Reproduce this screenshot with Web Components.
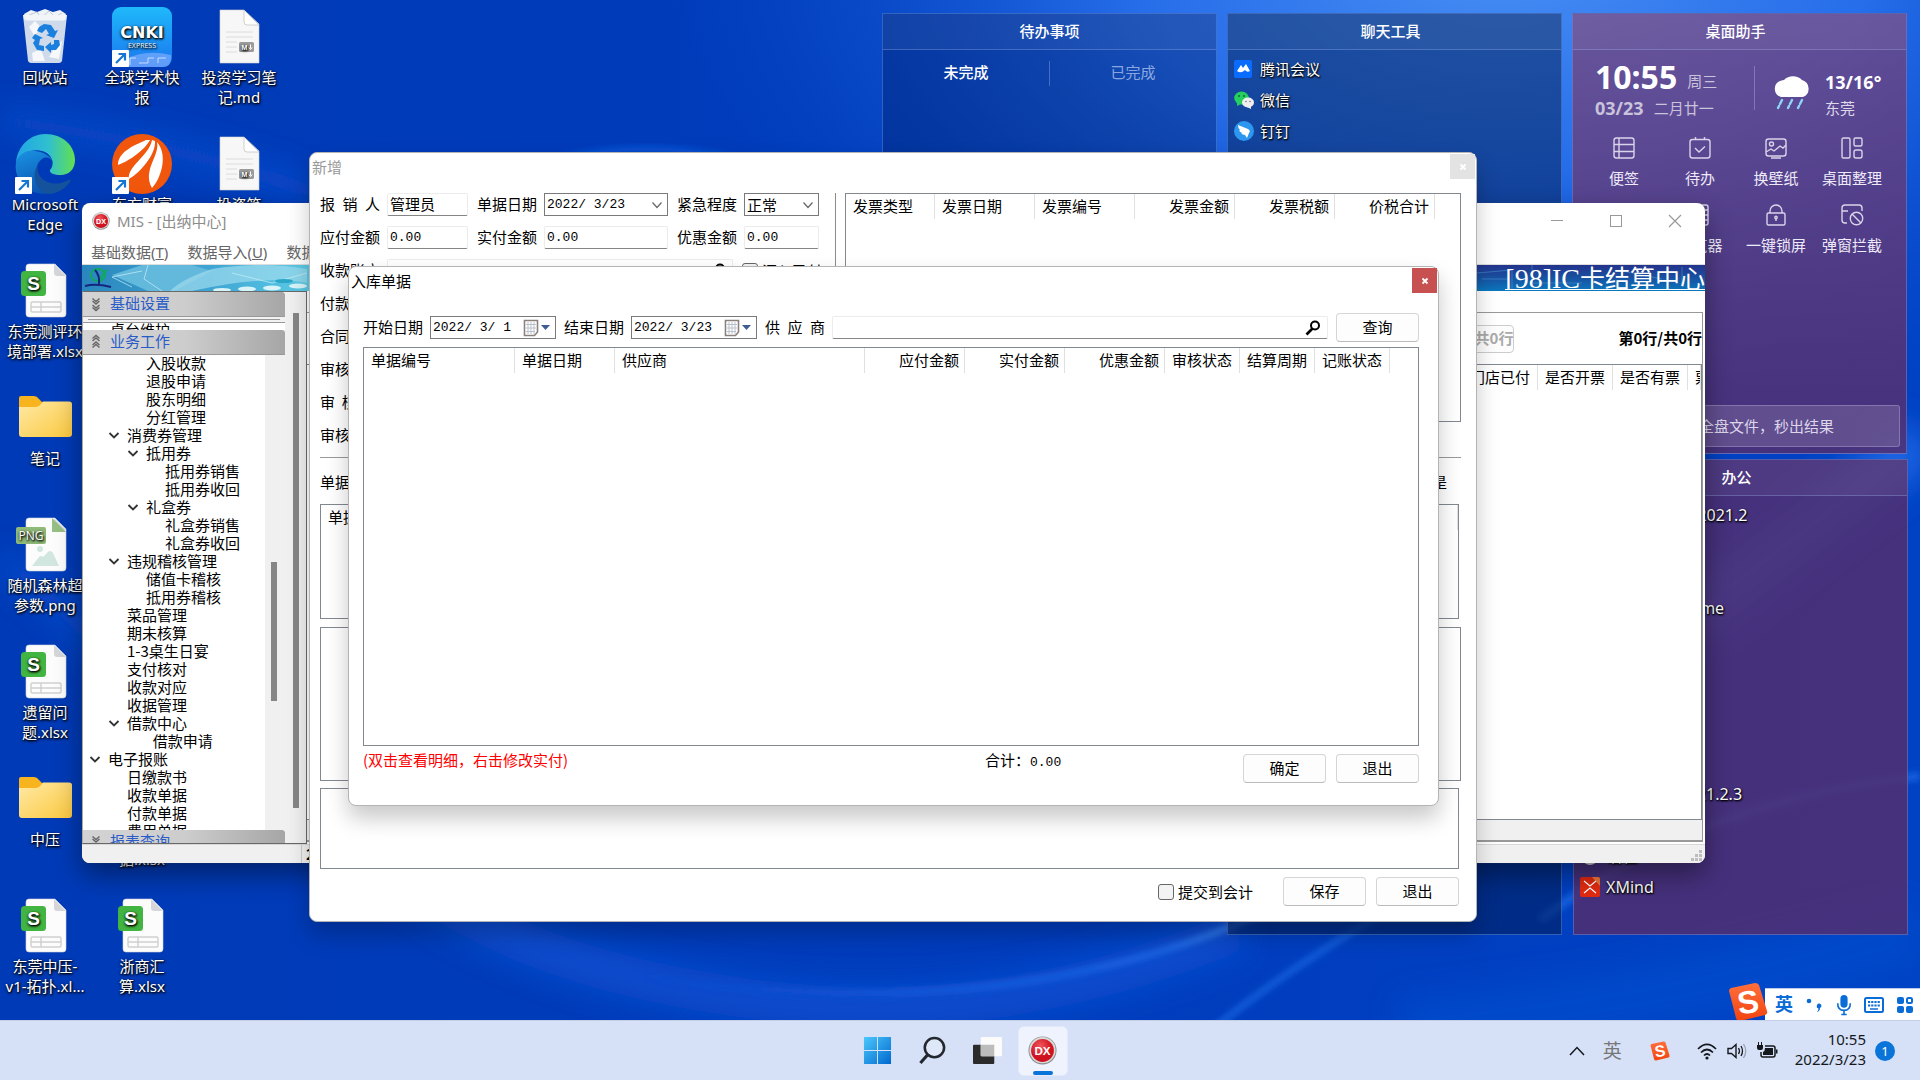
<!DOCTYPE html>
<html lang="zh-CN">
<head>
<meta charset="utf-8">
<title>桌面</title>
<style>
  html, body { margin: 0; height: 100%; overflow: hidden; }
  body { font: 15px/20px "Noto Sans", "Noto Sans CJK SC", sans-serif; }
</style>
</head>
<body>
<desktop-shell></desktop-shell>
<script>
const FORM_FONT = '"Noto Sans CJK SC", sans-serif';

function define(name, render) {
  customElements.define(name, class extends HTMLElement {
    constructor() {
      super();
      this.attachShadow({ mode: 'open' });
    }
    connectedCallback() {
      const t = document.createElement('template');
      t.innerHTML = '<style>*{box-sizing:border-box}</style>' + render(k => this.getAttribute(k) || '', this);
      this.shadowRoot.replaceChildren(t.content.cloneNode(true));
    }
  });
}

/* ---------- icons ---------- */
const DX = `<defs><radialGradient id="dx" cx=".4" cy=".3"><stop offset="0" stop-color="#f0575c"/><stop offset="1" stop-color="#cf1220"/></radialGradient></defs>
  <circle cx="15" cy="15" r="14.500" fill="#8d8d8d"/><circle cx="15" cy="14.600" r="13.600" fill="#d9d9d9"/><circle cx="15" cy="15" r="11.800" fill="url(#dx)"/>
  <text x="15" y="19.400" font-size="12" font-weight="700" text-anchor="middle" fill="#fff" font-family="Liberation Sans">DX</text>`;
const SHORTCUT = `<rect x="0" y="43" width="17" height="17" rx="1" fill="#fff"/><path d="M4 56L13 47M6.500 47H13V53.500" fill="none" stroke="#1677d2" stroke-width="2.200"/>`;
const SHEET = `<path d="M14 3H40L51 14V53Q51 56 48 56H14Q11 56 11 53V6Q11 3 14 3Z" fill="#fcfcfc" stroke="#cdd3dc" stroke-width=".6"/><path d="M39 3L51 15H42Q39 15 39 12Z" fill="#d4d6da"/>`;
const MD = `<path d="M11 3H35L50 17V56H11Z" fill="#f7f7f7" stroke="#d2d2d2" stroke-width=".6"/><path d="M35 3L50 18H38Q35 18 35 15Z" fill="#fff" stroke="#c4c4c4" stroke-width=".8"/>
  <path d="M17 25H44M17 30H44M17 35H28M17 40H28M17 45H28" stroke="#dcdcdc" stroke-width="1"/><rect x="30" y="35" width="15" height="10" rx="1.500" fill="#9b9b9b"/>
  <text x="35.500" y="42.600" font-size="7" font-weight="700" text-anchor="middle" fill="#fff" font-family="Liberation Sans">M</text><path d="M41.500 37.500V41.500M39.900 40.500L41.500 42.500L43.100 40.500" stroke="#fff" fill="none"/>`;
const ICONS = {
  dx: ['0 0 30 30', DX],
  bin: ['0 0 60 60', `<path d="M9 7L16 3L22 5L30 2L38 5L45 3L51 7L49 14H11Z" fill="#eef3f8"/><path d="M14 8L22 5L26 11L34 4L40 10L47 6" fill="none" stroke="#c3ccd6"/>
    <path d="M8 8H52L47 54Q46 56 44 56H16Q14 56 13 54Z" fill="#dfe7ef" fill-opacity=".93"/><path d="M8 8H52L51 13H9Z" fill="#fff" fill-opacity=".6"/><path d="M14 20L20 14L27 22L19 28ZM40 40L47 34L44 52L34 50ZM17 46L26 42L30 54L18 54Z" fill="#fff" fill-opacity=".8"/>
    <g fill="#1a7fdd"><path d="M24 20L29 17L36 18L40 24L43 23L39 31L31 28L34 27L31 22L27 26L22 24Z"/><path d="M20 27L28 31L25 32L24 38L29 39V44L22 43L18 36L20 33L17 31Z"/><path d="M44 33L45 38L41 43H36V46L30 40L36 35V38L39 37L39 33Z"/></g>`],
  cnki: ['0 0 60 60', `<defs><linearGradient id="g" x2="0" y2="1"><stop offset="0" stop-color="#1fb9fb"/><stop offset="1" stop-color="#1a76ef"/></linearGradient></defs><rect width="60" height="60" rx="9" fill="url(#g)"/>
    <path d="M14 52Q34 42 59 48V51Q59 60 51 60H14Z" fill="#8db4ff" fill-opacity=".6"/><path d="M18 58V51H24M27 56H36V51H42M46 56V51H54" stroke="#dfeaff" fill="none" stroke-width=".8"/>
    <text x="30" y="31" font-size="16" font-weight="700" text-anchor="middle" fill="#fff" font-family="DejaVu Sans">CNKI</text><text x="30" y="41" font-size="7" text-anchor="middle" fill="#fff" font-family="Open Sans">EXPRESS</text>` + SHORTCUT],
  edge: ['0 0 60 60', `<defs><linearGradient id="a" x1="0" x2="1"><stop offset="0" stop-color="#21a4e6"/><stop offset=".55" stop-color="#30c0cf"/><stop offset="1" stop-color="#62e04f"/></linearGradient><linearGradient id="b" x2=".4" y2="1"><stop offset="0" stop-color="#1b93e2"/><stop offset="1" stop-color="#0a56b4"/></linearGradient></defs>
    <path d="M1 28C3 11 16 0 30 0C48 0 60 12 60 26C60 36 53 41 46 41C39 41 34 39 35 36C38 33 39 27 35 22C29 14 9 13 1 28Z" fill="url(#a)"/>
    <path d="M1 28C5 18 14 16 20 17C30 18 37 24 38 28C36 24 31 22 27 25C22 29 20 35 23 42C27 52 38 57 46 54C36 61 25 61 16 57C5 51 -1 40 1 28Z" fill="url(#b)"/>
    <path d="M23 31C20 43 33 52 46 49C51 48 54 45 56 46C52 54 42 60 33 60C22 58 15 42 23 31Z" fill="#15529c"/>` + SHORTCUT],
  east: ['0 0 60 60', `<circle cx="30" cy="30" r="30" fill="#f0560c"/><path d="M34 6C21 12 6 18 6 31C15 28 32 17 38 6Z" fill="#fff"/><path d="M40 6C37 22 15 32 17 45C29 38 44 20 43 7Z" fill="#fff"/><path d="M45 8C48 22 30 36 40 54C48 46 57 22 45 8Z" fill="#fff"/>` + SHORTCUT],
  md: ['0 0 60 60', MD],
  xlsx: ['0 0 60 60', SHEET + `<rect x="16" y="41" width="30" height="10" rx="1.500" fill="none" stroke="#cfcfcf" stroke-width="1.400"/><path d="M16 46H46M26 41V51" stroke="#cfcfcf" stroke-width="1.400"/><rect x="6" y="10" width="25" height="25" rx="3.500" fill="#41b441"/><text x="18.500" y="29" font-size="19" font-weight="700" text-anchor="middle" fill="#fff" font-family="Liberation Sans">S</text>`],
  png: ['0 0 60 60', SHEET + `<path d="M37 3L51 17H37Z" fill="#96bf85"/><circle cx="25" cy="34" r="3" fill="#d2e6e0"/><path d="M17 51L24 42Q26 40 28 42L32 38Q35 34 38 38L44 51Z" fill="#d2e6e0"/><rect x="1" y="12" width="30" height="17" rx="2" fill="#8fba78"/><text x="16" y="25" font-size="12" text-anchor="middle" fill="#fff" font-family="Open Sans">PNG</text>`],
  folder: ['0 0 60 60', `<defs><linearGradient id="f" x2="1" y2="1"><stop offset="0" stop-color="#ffe9a6"/><stop offset="1" stop-color="#fbc93f"/></linearGradient></defs><path d="M4 10Q4 8 6 8H19Q22 8 24 11L27 14H54Q56 14 56 16V24H4Z" fill="#f7b41f"/><path d="M4 19H21Q24 19 26 16L28 13.500H54Q57 13.500 57 16V46Q57 49 54 49H7Q4 49 4 46Z" fill="url(#f)"/>`],
  meeting: ['0 0 20 20', `<rect y="1" width="18" height="18" rx="2" fill="#0a6cff"/><path d="M3 12L7 6L9 9L12 5L16 12Q13 14 11 11Q7 15 3 12Z" fill="#fff"/>`],
  wechat: ['0 0 20 20', `<ellipse cx="7.500" cy="8" rx="7.300" ry="6.500" fill="#25cf60"/><path d="M3 12L3 16L7 14Z" fill="#25cf60"/><ellipse cx="14" cy="12.500" rx="6" ry="5" fill="#efefef"/><path d="M17 16V19L13 17Z" fill="#efefef"/><circle cx="5" cy="6" r="1" fill="#0d6b2c"/><circle cx="10" cy="6" r="1" fill="#0d6b2c"/><circle cx="12" cy="11.500" r=".8" fill="#777"/><circle cx="16" cy="11.500" r=".8" fill="#777"/>`],
  ding: ['0 0 20 20', `<circle cx="10" cy="10" r="10" fill="#2d96ef"/><path d="M4 4L14 8Q17 10 15 12L13 17L11 14Q6 13 8 12Q4 10 6 9Q4 7 4 4Z" fill="#fff"/>`],
  xmind: ['0 0 20 20', `<rect width="20" height="20" rx="2" fill="#e32a10"/><path d="M12 0H18Q20 0 20 2V9Z" fill="#f07a3c"/><path d="M4 4L10 9L16 4M4 16L10 11L16 16" fill="none" stroke="#fff" stroke-width="1.300"/>`],
  disc: ['0 0 20 20', `<circle cx="10" cy="10" r="9" fill="#d8dcd8"/>`],
  cloud: ['0 0 40 38', `<path d="M9 24A8.500 8.500 0 0 1 8 8Q11 7 12 7A12 11 0 0 1 30 7A9 9 0 0 1 31 24Z" fill="#fff"/><path d="M10 27L8 31M7 33L6 35M20 27L18 31M17 33L16 35M30 27L28 31M27 33L26 35" stroke="#8fd4f7" stroke-width="2.400" stroke-linecap="round"/>`],
  note: ['0 0 24 24', `<rect x="2" y="2" width="20" height="20" rx="2.500"/><path d="M2 8.500H22M2 15.500H22M7 2V22"/>`],
  todo: ['0 0 24 24', `<rect x="2" y="3.500" width="20" height="18.500" rx="2.500"/><path d="M7.500 1V4M16.500 1V4M7 12L11 16L17 10.500"/>`],
  wall: ['0 0 24 24', `<rect x="2" y="3" width="20" height="17" rx="2.500"/><circle cx="7.500" cy="8" r="2"/><path d="M2 16L7 13L10 15L16 10L19 12L22 9M7 22H17"/>`],
  tidy: ['0 0 24 24', `<rect x="2" y="2" width="8" height="20" rx="1.500"/><rect x="14" y="2" width="8" height="8" rx="1.500"/><rect x="14" y="14" width="8" height="8" rx="2"/>`],
  viewer: ['0 0 24 24', `<rect x="2" y="2" width="18" height="20" rx="2"/><path d="M13 7H20M13 12H20M13 17H20"/>`],
  lock: ['0 0 24 24', `<rect x="3" y="10" width="18" height="12" rx="1.500"/><path d="M6 10V8A6 6 0 0 1 18 8V10M12 15V18"/><circle cx="12" cy="14.500" r="1.200"/>`],
  block: ['0 0 24 24', `<path d="M22 8V5Q22 2 19 2H5Q2 2 2 5V17Q2 20 5 20H7M2 8H8"/><circle cx="16.500" cy="15.500" r="6.200"/><path d="M12 11L21 20"/>`],
  start: ['0 0 30 30', `<defs><linearGradient id="s" x2="1" y2="1"><stop offset="0" stop-color="#4cc8fb"/><stop offset="1" stop-color="#0068cf"/></linearGradient></defs><path d="M1 1H14.500V14.500H1ZM15.500 1H29V14.500H15.500ZM1 15.500H14.500V29H1ZM15.500 15.500H29V29H15.500Z" fill="url(#s)"/>`],
  find: ['0 0 30 30', `<circle cx="17" cy="12" r="10" fill="#e4edf9" fill-opacity=".6" stroke="#23272e" stroke-width="2.600"/><path d="M10 19.500L2.500 28" stroke="#23272e" stroke-width="3.200"/>`],
  views: ['0 0 30 30', `<rect y="9" width="22" height="20" rx="1" fill="#2b2b2b"/><rect x="8" y="1" width="22" height="20" rx="1" fill="#fbfbfb"/><path d="M8 9H22V21H9Q8 21 8 20Z" fill="#bcbcbc"/>`],
  sogou: ['0 0 40 38', `<defs><linearGradient id="sg" x2="0" y2="1"><stop offset="0" stop-color="#ff6f3c"/><stop offset="1" stop-color="#f2440f"/></linearGradient></defs><path d="M1 8Q1 6 3 5L27 0Q30 0 31 2L39 28Q40 31 37 32L12 38Q9 38 8 35Z" fill="url(#sg)"/><text x="20" y="30" font-size="32" font-weight="700" text-anchor="middle" fill="#fff" font-family="Liberation Sans" transform="rotate(-8 20 19)">S</text>`],
  wifi: ['0 0 22 20', `<g fill="none" stroke="#15181d" stroke-width="1.700"><path d="M2 8Q11 -1 20 8M5 11.500Q11 5.500 17 11.500M8 14.500Q11 11.500 14 14.500"/></g><circle cx="11" cy="17" r="1.600" fill="#15181d"/>`],
  sound: ['0 0 22 20', `<path d="M2 7.500H5.500L10 3.500V16.500L5.500 12.500H2Z" fill="none" stroke="#15181d" stroke-width="1.400"/><path d="M12.500 7Q14.500 10 12.500 13M15 5Q18 10 15 15" fill="none" stroke="#15181d" stroke-width="1.300"/><path d="M17.500 3Q22 10 17.500 17" fill="none" stroke="#9aa3b3" stroke-width="1.300"/>`],
  battery: ['0 0 22 20', `<path d="M9 5H17Q19 5 19 7V14Q19 16 17 16H7Q5 16 5 14V11" fill="none" stroke="#15181d" stroke-width="1.500"/><path d="M9 7H17V14H7V11Q9 10 9 7ZM20 8.500H21.500V12.500H20ZM1 4H7V7Q7 9 5 9H3Q1 9 1 7ZM2 1H3V4H2ZM5 1H6V4H5Z" fill="#15181d"/>`],
  mic: ['0 0 20 24', `<rect x="6" y="1" width="8" height="14" rx="4" fill="#0a6cd6"/><path d="M3 10Q3 18 10 18Q17 18 17 10M10 18V22M7 22.500H13" fill="none" stroke="#0a6cd6" stroke-width="1.800"/>`],
  keys: ['0 0 20 18', `<rect x="1" y="2" width="18" height="14" rx="1.500" fill="none" stroke="#0a6cd6" stroke-width="2"/><path d="M4 6H16M4 9.500H16" stroke="#0a6cd6" stroke-width="2" stroke-dasharray="2.200 1"/><path d="M6 13H14" stroke="#0a6cd6" stroke-width="1.500"/>`],
  tiles: ['0 0 18 18', `<rect x="1" y="1" width="7" height="7" rx="2" fill="#0a6cd6"/><rect x="1" y="10" width="7" height="7" rx="2" fill="#0a6cd6"/><rect x="10" y="10" width="7" height="7" rx="2" fill="#0a6cd6"/><rect x="11" y="2" width="5" height="5" rx="1.500" fill="none" stroke="#0a6cd6" stroke-width="2"/>`],
  punct: ['0 0 18 18', `<circle cx="4" cy="5" r="2.300" fill="#0a6cd6"/><path d="M12 9A2.300 2.300 0 1 1 15 12Q15 15 12 16Q13.500 14 13.500 12.500Q11 12 12 9Z" fill="#0a6cd6"/>`],
  caret: ['0 0 18 18', `<path d="M2 13L9 5.500L16 13" fill="none" stroke="#15181d" stroke-width="1.500"/>`],
  drop: ['0 0 12 12', `<path d="M1.500 3.500L6 8.500L10.500 3.500" fill="none" stroke="#666" stroke-width="1.200"/>`],
  tree: ['0 0 12 12', `<path d="M1.500 4L6 8.500L10.500 4" fill="none" stroke="#333" stroke-width="1.800"/>`],
  dbl: ['0 0 10 14', `<path d="M1.500 1.500L5 4.500L8.500 1.500M1.500 4L5 7L8.500 4M1.500 8L5 11L8.500 8M1.500 10.500L5 13.500L8.500 10.500" fill="none" stroke="#666" stroke-width="1.400"/>`],
  dblup: ['0 0 10 14', `<path d="M1.500 6L5 3L8.500 6M1.500 3.500L5 .5L8.500 3.500M1.500 12.500L5 9.500L8.500 12.500M1.500 10L5 7L8.500 10" fill="none" stroke="#666" stroke-width="1.400"/>`],
  lens: ['0 0 16 16', `<circle cx="10" cy="5.500" r="4" fill="none" stroke="#000" stroke-width="2"/><path d="M7.500 8.500L1.500 14.500" stroke="#000" stroke-width="2.600"/>`],
  cal: ['0 0 28 18', `<path d="M1.500 1.500H14.500V13L11.500 16.500H1.500Z" fill="#fff" stroke="#8a817c" stroke-width="1.600"/><path d="M3 5.500H13M3 9H13M3 12.500H12M5 3V15M8 3V15M11 3V15" stroke="#b9c0cc"/><path d="M18 6H27L22.500 11Z" fill="#3f5d94"/>`],
  min: ['0 0 14 14', `<path d="M1 6.500H13" stroke="#999"/>`],
  max: ['0 0 14 14', `<rect x="1.500" y="1.500" width="11" height="11" fill="none" stroke="#999"/>`],
  close: ['0 0 14 14', `<path d="M1 1L13 13M13 1L1 13" stroke="#999" stroke-width="1.200"/>`],
  x: ['0 0 8 8', `<path d="M1.500 1.500L6.500 6.500M6.500 1.500L1.500 6.500" stroke="#fff" stroke-width="1.800"/>`],
  grip: ['0 0 12 12', `<path d="M8 0H11V3H8ZM4 4H7V7H4ZM8 4H11V7H8ZM0 8H3V11H0ZM4 8H7V11H4ZM8 8H11V11H8Z" fill="#bdbdbd"/>`]
};
define('ui-icon', a => {
  const [box, art] = ICONS[a('name')];
  return `<style>:host{display:block;flex:none}svg{display:block;width:100%;height:100%;overflow:visible}
    :host([line]) svg{fill:none;stroke:#d9d4ea;stroke-width:1.400}</style><svg viewBox="${box}" aria-hidden="true">${art}</svg>`;
});

/* ---------- wallpaper ---------- */
define('wall-paper', () => `<style>:host{display:block}svg{display:block;width:100%;height:100%}</style>
<svg viewBox="0 0 1920 1080" preserveAspectRatio="none" aria-hidden="true">
 <defs>
  <linearGradient id="base" x2="1"><stop offset="0" stop-color="#003ab6"/><stop offset=".5" stop-color="#003cbc"/><stop offset="1" stop-color="#0042c4"/></linearGradient>
  <radialGradient id="glow" gradientUnits="userSpaceOnUse" cx="1500" cy="-60" r="640" gradientTransform="translate(1500 0) scale(1.300 .75) translate(-1500 0)"><stop offset="0" stop-color="#4a90f5"/><stop offset=".45" stop-color="#2a72ee" stop-opacity=".9"/><stop offset="1" stop-color="#0a50d0" stop-opacity="0"/></radialGradient>
  <linearGradient id="arc" gradientUnits="userSpaceOnUse" x1="640" y1="0" x2="1290" y2="0"><stop offset="0" stop-color="#0b50d4" stop-opacity="0"/><stop offset=".4" stop-color="#1259da"/><stop offset=".8" stop-color="#1c66e4"/><stop offset="1" stop-color="#4a94f8"/></linearGradient>
  <filter id="b1" x="-20%" y="-50%" width="140%" height="200%"><feGaussianBlur stdDeviation="3"/></filter>
  <filter id="b2" x="-20%" y="-50%" width="140%" height="200%"><feGaussianBlur stdDeviation="16"/></filter>
 </defs>
 <rect width="1920" height="1080" fill="url(#base)"/>
 <rect width="1920" height="700" fill="url(#glow)"/>
 <g fill="none">
  <path d="M0 120C150 140 260 170 330 200" stroke="#0a4ccd" stroke-width="22" filter="url(#b2)"/>
  <path d="M0 560Q60 600 110 660" stroke="#0a4ed0" stroke-width="20" filter="url(#b2)"/>
  <path d="M560 160Q640 138 740 160" stroke="#0f5adb" stroke-width="5" filter="url(#b1)"/>
  <path d="M400 870Q520 970 760 1000T1240 930" stroke="#084dcf" stroke-width="40" filter="url(#b2)"/>
  <path d="M640 975Q840 1005 1000 985T1290 900" stroke="url(#arc)" stroke-width="6" filter="url(#b1)"/>
  <path d="M1200 1040Q1270 980 1380 915" stroke="#1560dc" stroke-width="6" filter="url(#b1)"/>
  <path d="M1540 920Q1700 800 1920 776" stroke="#1660dd" stroke-width="8" filter="url(#b1)"/>
  <path d="M1660 640Q1820 520 1920 440" stroke="#1b66e4" stroke-width="50" filter="url(#b2)"/>
  <path d="M1400 1030Q1700 1000 1920 930" stroke="#0648ca" stroke-width="60" filter="url(#b2)"/>
 </g>
</svg>`);

/* ---------- desktop icons ---------- */
define('desk-icon', a => `<style>
  :host{display:flex;flex-direction:column;align-items:center;color:#fff;text-align:center;white-space:nowrap;text-shadow:1px 1px 2px #000,0 1px 3px #000}
  ui-icon{width:60px;height:60px}
</style><ui-icon name="${a('icon')}"></ui-icon><span>${a('label').replace('|', '<br>')}</span>`);

/* ---------- glass widgets ---------- */
define('glass-panel', a => `<style>
  :host{display:flex;flex-direction:column;border:1px solid rgba(120,165,240,.4);background:var(--glass);color:#fff}
  h2{margin:0;height:36px;padding-right:var(--tools,0);font:500 15px/34px "Noto Sans CJK SC",sans-serif;text-align:center;border-bottom:1px solid rgba(160,180,240,.32);background:rgba(255,255,255,.05)}
</style><h2>${a('heading')}</h2><slot></slot>`);

define('todo-tabs', () => `<style>
  :host{display:flex;align-items:center;padding:11px 0}
  button{flex:1;height:25px;border:0;background:none;color:#fff;font:500 15px/22px "Noto Sans CJK SC",sans-serif;padding:0 0 3px}
  button+button{border-left:1px solid rgba(150,180,240,.4);color:rgba(220,230,255,.62);font-weight:400}
</style><button>未完成</button><button>已完成</button>`);

define('launch-list', a => `<style>
  :host{display:flex;flex-direction:column;padding:3px 6px}
  a{display:flex;align-items:center;gap:6px;height:31px;color:#fff;text-decoration:none;font-size:15px;text-shadow:1px 1px 2px #000,0 1px 2px #000}
  ui-icon,i{width:20px;height:20px;flex:none}
  :host([large]) a{font-size:16px}
</style>` + a('items').split(',').map(s => { const [t, i] = s.split(':'); return `<a href="#">${i ? `<ui-icon name="${i}"></ui-icon>` : '<i></i>'}${t}</a>`; }).join(''));

define('assist-body', () => `<style>
  :host{display:flex;flex-direction:column;flex:1;padding:0 6px 6px 0}
  .top{display:flex;height:86px;align-items:center;padding:0 0 10px 22px}
  .clock{width:160px;height:44px;border-right:1px solid rgba(180,170,220,.45);display:flex;flex-direction:column;gap:9px}
  .r{display:flex;align-items:center;gap:10px;white-space:nowrap;height:22px;flex:none}
  b{font-size:32px;line-height:22px}
  .d{color:#c9c3dc}.r>span.d{padding-top:8px}.d strong{font-size:18px;line-height:24px}
  ui-icon.c{width:40px;height:38px;margin:8px 13px 0 17px}
  .w{padding-top:14px;line-height:26px;color:#ddd8ec}
  .w strong{display:block;font-size:18px;color:#fff}
  .g{display:grid;grid-template-columns:repeat(4,76px);padding-left:13px;row-gap:14px}
  button{display:flex;flex-direction:column;align-items:center;gap:8px;border:0;background:none;padding:0;color:#eeeaf8;font:15px/20px "Noto Sans CJK SC",sans-serif;white-space:nowrap;height:53px}
  .g ui-icon{width:24px;height:24px}
  input{margin-top:auto;margin-left:18px;height:42px;border:1px solid rgba(190,175,220,.4);border-radius:3px;background:rgba(255,255,255,.14);color:#ddd6ea;font:15px/20px "Noto Sans CJK SC",sans-serif;padding:0 65px 2px;text-align:right;min-width:0}
</style>
<div class="top"><div class="clock"><div class="r"><b>10:55</b><span class="d">周三</span></div><div class="r d"><strong>03/23</strong>二月廿一</div></div>
<ui-icon class="c" name="cloud"></ui-icon><div class="w"><strong>13/16°</strong>东莞</div></div>
<div class="g">${[['note', '便签'], ['todo', '待办'], ['wall', '换壁纸'], ['tidy', '桌面整理'], ['', ''], ['viewer', '浏览器'], ['lock', '一键锁屏'], ['block', '弹窗拦截']].map(([i, t]) => i ? `<button><ui-icon line name="${i}"></ui-icon>${t}</button>` : '<span></span>').join('')}</div>
<input aria-label="文件搜索" value="全盘文件，秒出结果">`);

/* ---------- form pieces ---------- */
define('form-field', a => {
  const kind = a('kind');
  const ctl = kind === 'select' ? `<select id="c"><option>${a('value')}</option></select>` : `<input id="c" value="${a('value')}" class="${/^[\d]/.test(a('value')) ? 'num' : ''}">`;
  const deco = { date: 'drop', select: 'drop', cal: 'cal', lens: 'lens' }[kind];
  return `<style>
  :host{display:flex;align-items:center;gap:7px;height:23px;font:15px/20px ${FORM_FONT};color:#000}
  label,span.bare{flex:none;width:60px;padding-bottom:2px;text-align:justify;text-align-last:justify;white-space:nowrap}
  span.bare{text-align-last:left}
  .box{display:flex;align-items:center;flex:1;min-width:0;height:23px;background:#fff;border:1px solid #ececec;border-bottom-color:#858585;border-radius:2px}
  .box.k-date,.box.k-select,.box.k-cal{border-color:#7a7a7a;border-radius:0}
  input,select{flex:1;min-width:0;width:0;height:20px;border:0;outline:0;padding:0 0 2px 2px;background:none;color:#000;font:inherit;appearance:none}
  input.num{padding-bottom:0;font:13px/20px "Liberation Mono",monospace}
  ui-icon{width:12px;height:12px;margin-right:4px}
  ui-icon[name=cal]{width:28px;height:18px}ui-icon[name=lens]{width:16px;height:16px;margin-right:6px}
  </style>` + (a('bare') ? `<span class="bare">${a('label')}</span>` : `<label for="c">${a('label')}</label><span class="box k-${kind}">${ctl}${deco ? `<ui-icon name="${deco}"></ui-icon>` : ''}</span>`);
});

define('check-field', a => `<style>:host{display:flex}label{display:flex;align-items:center;gap:4px;font:15px/20px ${FORM_FONT};white-space:nowrap}
  input{appearance:none;margin:0;width:16px;height:16px;border:1px solid #666;border-radius:3px;background:#f3f3f3}</style><label><input type="checkbox">${a('label')}</label>`);

define('push-button', a => `<style>:host{display:block;flex:none}button{display:block;width:83px;height:29px;border:1px solid #d5d5d5;border-bottom-color:#bbb;border-radius:4px;background:#fdfdfd;color:#000;font:15px/20px ${FORM_FONT};padding:0 0 2px}</style><button>${a('label')}</button>`);

/* columns: "title/width/align", a dash width means the column takes the rest */
define('data-grid', a => `<style>
  :host{display:block;background:#fff;border:1px solid #828790;overflow:hidden}
  table{width:100%;table-layout:fixed;border-collapse:separate;border-spacing:0}
  th{height:25px;padding:0 5px 2px 7px;border-right:1px solid #e0e0e0;font:400 15px/23px ${FORM_FONT};text-align:left;white-space:nowrap;overflow:hidden}
  th.r{text-align:right}th.last{border:0}
</style><table><thead><tr>${a('columns').split(',').map(c => { const [t, w, r] = c.split('/'); return `<th class="${r || ''} ${t ? '' : 'last'}" ${w === '-' ? '' : `style="width:${w}px"`}>${t}</th>`; }).join('')}</tr></thead></table>`);

define('tool-dialog', a => `<style>
  :host{display:flex;flex-direction:column;background:#fff;border:1px solid #b4b4b4;border-radius:8px;box-shadow:0 12px 22px rgba(0,0,0,.22);color:#000;font:15px/20px ${FORM_FONT}}
  header{display:flex;justify-content:space-between;height:28px;padding:1px 1px 0 2px;line-height:25px;color:var(--title,#000)}
  button{display:grid;place-items:center;width:25px;height:25px;border:0;padding:0;background:var(--close,#c75050)}
  ui-icon{width:8px;height:8px}
  slot{display:flex;flex-direction:column;flex:1}
</style><header><span>${a('heading')}</span><button aria-label="关闭"><ui-icon name="x"></ui-icon></button></header><slot></slot>`);

/* ---------- expense form ---------- */
define('expense-form', () => `<style>
  :host{display:flex;flex-direction:column;padding:12px 15px 15px 10px}
  .top{display:flex;gap:9px}
  .left{width:516px;padding-right:16px;border-right:1px solid #8c8c8c;display:flex;flex-direction:column;gap:10px}
  .row{display:flex;gap:9px;align-items:center;height:23px}
  .a{width:148px}.b{width:191px}.c{width:142px}.wide{width:413px;flex:none}
  .inv{flex:1;height:229px}
  hr{width:100%;height:1px;border:0;margin:10px 0 0;background:#9a9a9a}
  .kind{display:flex;justify-content:space-between;align-items:center;height:46px;padding:2px 14px 0 0}
  .one{height:115px;margin-right:2px}.two{height:154px;margin-top:8px}
  textarea{height:81px;margin:7px 2px 0 0;border:1px solid #828790;resize:none;outline:0;background:#fff}
  footer{display:flex;justify-content:flex-end;align-items:center;gap:10px;margin:8px 2px 0 0}
  footer check-field{margin-right:20px}
</style>
<div class="top"><div class="left">
 <div class="row"><form-field class="a" label="报 销 人" value="管理员"></form-field><form-field class="b" kind="date" label="单据日期" value="2022/&nbsp;3/23"></form-field><form-field class="c" kind="select" label="紧急程度" value="正常"></form-field></div>
 <div class="row"><form-field class="a" label="应付金额" value="0.00"></form-field><form-field class="b" label="实付金额" value="0.00"></form-field><form-field class="c" label="优惠金额" value="0.00"></form-field></div>
 <div class="row"><form-field class="wide" kind="lens" label="收款账户"></form-field><check-field label="汇入已付"></check-field></div>
 <form-field bare="1" label="付款"></form-field>
 <form-field bare="1" label="合同"></form-field>
 <form-field bare="1" label="审核"></form-field>
 <form-field bare="1" label="审&nbsp;&nbsp;核"></form-field>
 <form-field bare="1" label="审核"></form-field>
</div><data-grid class="inv" columns="发票类型/89,发票日期/100,发票编号/100,发票金额/100/r,发票税额/100/r,价税合计/100/r,/-"></data-grid></div>
<hr><div class="kind"><span>单据</span><span>是</span></div>
<data-grid class="one" columns="单据/-"></data-grid>
<data-grid class="two" columns="/-"></data-grid>
<textarea aria-label="备注"></textarea>
<footer><check-field label="提交到会计"></check-field><push-button label="保存"></push-button><push-button label="退出"></push-button></footer>`);

/* ---------- stock receipts ---------- */
define('receipt-picker', () => `<style>
  :host{display:flex;flex-direction:column;flex:1;padding:18px 19px 21px 14px}
  .q{display:flex;gap:8px;align-items:center;height:29px}
  .d{width:193px}.s{flex:1}
  data-grid{flex:1;margin-top:5px}
  footer{display:flex;gap:10px;line-height:27px;height:38px;align-items:flex-start}
  .hint{color:#f00;width:612px}.sum{flex:1}.sum span{font:13px/27px "Liberation Mono",monospace}
  footer push-button{margin-top:8px}
</style>
<div class="q"><form-field class="d" kind="cal" label="开始日期" value="2022/&nbsp;3/&nbsp;1"></form-field><form-field class="d" kind="cal" label="结束日期" value="2022/&nbsp;3/23"></form-field><form-field class="s" kind="lens" label="供 应 商"></form-field><push-button label="查询"></push-button></div>
<data-grid columns="单据编号/151,单据日期/100,供应商/250,应付金额/100/r,实付金额/100/r,优惠金额/100/r,审核状态/75,结算周期/75,记账状态/75,/-"></data-grid>
<footer><span class="hint">(双击查看明细，右击修改实付)</span><span class="sum">合计：<span>0.00</span></span><push-button label="确定"></push-button><push-button label="退出"></push-button></footer>`);

/* ---------- cash center window ---------- */
define('nav-head', a => `<style>:host{display:flex;align-items:center;gap:9px;flex:none;height:25px;padding-left:8px;background:linear-gradient(90deg,#d3d3d3,#cdcdcd 50%,#a6a6a6);border-bottom:1px solid #999;border-radius:0 3px 0 0;color:#2a5cc8;font:15px/22px "Noto Sans CJK SC",sans-serif;overflow:hidden}ui-icon{width:10px;height:14px}span{padding-bottom:2px}</style><ui-icon name="${a('icon')}"></ui-icon><span>${a('label')}</span>`);

define('nav-tree', () => {
  const rows = [[3, '入股收款'], [3, '退股申请'], [3, '股东明细'], [3, '分红管理'], [1, '消费券管理', 1], [2, '抵用券', 1], [4, '抵用券销售'], [4, '抵用券收回'], [2, '礼盒券', 1], [4, '礼盒券销售'], [4, '礼盒券收回'], [1, '违规稽核管理', 1], [3, '储值卡稽核'], [3, '抵用券稽核'], [2, '菜品管理'], [2, '期未核算'], [2, '1-3桌生日宴'], [2, '支付核对'], [2, '收款对应'], [2, '收据管理'], [1, '借款中心', 1], [3, '&nbsp;&nbsp;借款申请'], [0, '电子报账', 1], [2, '日缴款书'], [2, '收款单据'], [2, '付款单据'], [2, '费用单据']];
  return `<style>:host{display:block;background:#fff;overflow:hidden;font:15px/16px "Noto Sans CJK SC",sans-serif;color:#000}
  div{display:flex;align-items:center;height:18px;padding-bottom:2px;padding-left:calc(6px + 19px*var(--n));white-space:nowrap}ui-icon{width:12px;height:12px;margin-right:7px}</style>` +
    rows.map(([n, t, open]) => `<div style="--n:${n}">${open ? '<ui-icon name="tree"></ui-icon>' : ''}${t}</div>`).join('');
});

define('cash-window', () => `<style>
  :host{display:flex;flex-direction:column;background:#fff;border-radius:8px;overflow:hidden;box-shadow:0 0 1px #555,0 12px 26px rgba(0,0,0,.4);color:#000;font:15px/20px ${FORM_FONT}}
  header{display:flex;align-items:center;height:37px;padding:0 21px 2px 10px;gap:7px;color:#8c8c8c;font-family:"Noto Sans","Noto Sans CJK SC",sans-serif;font-size:15px}
  header>span{flex:1}
  .dx{width:18px;height:18px}
  header button{width:18px;height:18px;padding:2px;border:0;background:none;margin-left:34px}
  header button ui-icon{width:14px;height:14px}
  nav{display:flex;gap:19px;height:25px;padding-left:9px;line-height:25px;border-bottom:1px solid #ddd}
  nav a{color:#666;text-decoration:none;font-family:"Noto Sans","Noto Sans CJK SC",sans-serif}
  .banner{display:grid;height:26px;flex:none}
  .banner>*{grid-area:1/1}
  .banner svg{width:100%;height:26px}
  .banner strong{justify-self:end;height:25px;border-bottom:1px solid #fff;font:400 25px/24px "Noto Sans CJK SC",sans-serif;color:#fff;overflow:hidden}
  .banner strong span{font:28px/24px "Liberation Serif",serif}
  main{display:flex;flex:1;min-height:0}
  aside{display:flex;width:225px;border:1px solid #696969;border-left-color:#aaa;background:#f0f0f0}
  .col{display:flex;flex-direction:column;width:202px;background:#fff}
  .gap{height:6px;background:#f2f2f2;border-bottom:1px solid #999;flex:none}
  .gap hr{margin:2px 5px;border:0;height:1px;background:#999}
  .cut{height:7px;overflow:hidden;line-height:14px;padding-left:27px;flex:none}
  .tree{display:flex;height:475px;flex:none}
  nav-tree{flex:1}
  .bar{width:20px;background:#f0f0f0;flex:none;padding:207px 8px 0 6px}
  .bar i{display:block;height:139px;background:#868686}
  .outer{padding:21px 0 0 8px}.outer i{width:6px;height:495px;display:block;background:#868686}
  .last{flex:1;min-height:0;overflow:hidden}
  section{flex:1;display:flex;flex-direction:column;margin:21px 2px 2px 0;border:1px solid #999;border-width:1px 1px 2px 0;min-width:0}
  .pager{display:flex;justify-content:flex-end;align-items:center;height:51px;gap:104px;flex:none;font-weight:700}
  .pager span{padding-bottom:2px}
  .pager button{width:112px;height:28px;border:1px solid #ccc;border-radius:4px;background:#fdfdfd;color:#aaa;font:700 15px/20px ${FORM_FONT};padding:0 0 2px;text-align:right}
  data-grid{flex:1;border-left:0}
  .hs{height:20px;background:#f0f0f0}
  footer{display:flex;justify-content:space-between;height:19px;background:#f0f0f0;border-top:1px solid #d8d8d8;flex:none;line-height:18px;padding:0 2px 0 219px}
  footer span{border-left:1px solid #ccc;padding-left:4px;font-weight:700}
  footer ui-icon{width:12px;height:12px;margin-top:5px}
</style>
<header><ui-icon class="dx" name="dx"></ui-icon><span>MIS - [出纳中心]</span><button aria-label="最小化"><ui-icon name="min"></ui-icon></button><button aria-label="最大化"><ui-icon name="max"></ui-icon></button><button aria-label="关闭"><ui-icon name="close"></ui-icon></button></header>
<nav><a href="#">基础数据(<u>T</u>)</a><a href="#">数据导入(<u>U</u>)</a><a href="#">数据</a></nav>
<div class="banner"><svg viewBox="0 0 1623 26" preserveAspectRatio="none" aria-hidden="true">
 <defs><linearGradient id="bn" x2="1"><stop offset="0" stop-color="#2a86bd"/><stop offset=".08" stop-color="#3fa6d4"/><stop offset=".14" stop-color="#5ccbe6"/><stop offset=".6" stop-color="#2a7cc0"/><stop offset=".9" stop-color="#22459c"/></linearGradient><linearGradient id="bl" x2="0" y2="1"><stop offset="0" stop-color="#232f88" stop-opacity=".8"/><stop offset="1" stop-color="#0a78be"/></linearGradient></defs>
 <rect width="1623" height="26" fill="url(#bn)"/><path d="M60 0L30 10L66 26H92L130 6L110 0Z" fill="#63b9dc"/><path d="M130 4Q180 -4 225 4V18Q180 10 110 26H88Q100 14 130 4Z" fill="#9fdcee" fill-opacity=".7"/><path d="M60 6L30 12L50 22M66 0L62 14L80 26M150 8L190 18L225 8" fill="none" stroke="#c9eef8" stroke-opacity=".7"/><g fill="#d8f4f8"><ellipse cx="140" cy="25" rx="9" ry="2"/><ellipse cx="165" cy="24" rx="9" ry="2.500"/><ellipse cx="190" cy="23" rx="9" ry="2.500"/><ellipse cx="216" cy="21" rx="9" ry="2.500"/><ellipse cx="202" cy="16" rx="9" ry="2" fill="#2aa7c8"/></g>
 <ellipse cx="16" cy="10" rx="7" ry="6" fill="none" stroke="#0fa860" stroke-width="2"/><path d="M25 5L17 14" stroke="#0fa860" stroke-width="2"/><path d="M13 5Q18 10 17 20M3 21Q14 18 29 22" fill="none" stroke="#14267f" stroke-width="2"/>
 <rect x="1350" width="273" height="26" fill="url(#bl)"/><path d="M1395 8L1430 5V26M1400 14H1425M1450 0V18H1500M1540 6L1580 14M1600 2V20" stroke="#4a8fd0" stroke-opacity=".6" fill="none"/></svg><strong><span>[98]IC</span>卡结算中心</strong></div>
<main><aside><div class="col"><nav-head icon="dbl" label="基础设置"></nav-head><div class="gap"><hr></div><div class="cut">桌台维护</div><nav-head icon="dblup" label="业务工作"></nav-head><div class="tree"><nav-tree></nav-tree><div class="bar"><i></i></div></div><div class="last"><nav-head icon="dbl" label="报表查询"></nav-head></div></div><div class="outer"><i></i></div></aside>
<section><div class="pager"><button disabled>第0行/共0行</button><span>第0行/共0行</span></div><data-grid columns="/-,门店已付/75,是否开票/75,是否有票/75,票/11"></data-grid><div class="hs"></div></section></main>
<footer><span>2</span><ui-icon name="grip"></ui-icon></footer>`);

/* ---------- taskbar and input bar ---------- */
define('task-bar', () => `<style>
  :host{display:grid;grid-template-columns:1fr auto 1fr;align-items:center;height:60px;background:#d6e1f7;border-top:1px solid #c3cfe6;color:#15181d}
  .apps{grid-column:2;display:flex;align-items:center;gap:7px}
  button{border:0;background:none;padding:0;width:48px;height:48px;display:grid;place-items:center;border-radius:5px}
  button ui-icon{width:29px;height:29px}
  .on{background:#eef3fd;box-shadow:0 0 0 1px #e4eaf7;position:relative}
  .on::after{content:"";position:absolute;bottom:0;left:14px;width:20px;height:4px;border-radius:2px;background:#0a74d8}
  .tray{display:flex;justify-content:flex-end;align-items:center;padding-right:25px}
  .tray ui-icon{width:22px;height:20px}
  .tray .up{width:18px;height:18px;margin-right:17px}
  .tray .sg{width:20px;height:20px;margin:0 26px 0 28px}
  .tray .bt{margin-right:17px}
  .net{display:flex;gap:8px}
  .ime{font:19px/20px "Noto Sans CJK SC",sans-serif;color:#777;padding-bottom:2px}
  .time{text-align:right;font-size:15px;line-height:20px;padding-bottom:3px}
  .badge{width:20px;height:20px;border-radius:50%;background:#0a74d8;color:#fff;text-align:center;font-size:13px;line-height:20px;margin-left:9px}
</style>
<div class="apps"><button aria-label="开始"><ui-icon name="start"></ui-icon></button><button aria-label="搜索"><ui-icon name="find"></ui-icon></button><button aria-label="任务视图"><ui-icon name="views"></ui-icon></button><button class="on" aria-label="MIS"><ui-icon name="dx"></ui-icon></button></div>
<div class="tray"><ui-icon class="up" name="caret"></ui-icon><span class="ime">英</span><ui-icon class="sg" name="sogou"></ui-icon><div class="net"><ui-icon name="wifi"></ui-icon><ui-icon name="sound"></ui-icon><ui-icon class="bt" name="battery"></ui-icon></div><div class="time">10:55<br>2022/3/23</div><span class="badge">1</span></div>`);

define('ime-bar', () => `<style>
  :host{display:flex;align-items:center;justify-content:space-between;width:155px;height:32px;background:#fff;border-top:1px solid #b9cdea;padding:0 6px 0 10px;color:#0a6cd6;font:700 18px/28px "Noto Sans CJK SC",sans-serif}
  .s{position:absolute;left:-37px;top:-6px;width:40px;height:38px}
  .p{width:18px;height:18px}.m{width:18px;height:22px}.k{width:20px;height:18px}.t{width:18px;height:18px}
  span{padding-bottom:3px}
</style><ui-icon class="s" name="sogou"></ui-icon><span>英</span><ui-icon class="p" name="punct"></ui-icon><ui-icon class="m" name="mic"></ui-icon><ui-icon class="k" name="keys"></ui-icon><ui-icon class="t" name="tiles"></ui-icon>`);

/* ---------- shell ---------- */
define('desktop-shell', () => {
  const icons = [
    [1, 1, 'bin', '回收站'], [1, 2, 'edge', 'Microsoft|Edge'], [1, 3, 'xlsx', '东莞测评环|境部署.xlsx'], [1, 4, 'folder', '笔记'], [1, 5, 'png', '随机森林超|参数.png'], [1, 6, 'xlsx', '遗留问|题.xlsx'], [1, 7, 'folder', '中压'], [1, 8, 'xlsx', '东莞中压-|v1-拓扑.xl...'],
    [2, 1, 'cnki', '全球学术快|报'], [2, 2, 'east', '东方财富'], [2, 7, 'xlsx', '数|据.xlsx'], [2, 8, 'xlsx', '浙商汇|算.xlsx'],
    [3, 1, 'md', '投资学习笔|记.md'], [3, 2, 'md', '投资笔']];
  return `<style>
  :host{display:flex;flex-direction:column;height:100vh}
  .stage{position:relative;flex:1;overflow:hidden}
  .stage>*{position:absolute}
  wall-paper{inset:0 0 -60px}
  .icons{left:0;top:7px;display:grid;grid-template-columns:repeat(3,90px);grid-template-rows:repeat(8,127px);column-gap:7px}
  .todo{left:882px;top:13px;width:335px;height:440px;--glass:rgba(0,30,105,.4)}
  .chat{left:1227px;top:13px;width:335px;height:922px;--tools:8px;--glass:linear-gradient(rgba(10,45,110,.6),rgba(0,30,95,.6))}
  .help{left:1572px;top:13px;width:335px;height:441px;--tools:8px;--glass:linear-gradient(rgba(122,66,120,.7),rgba(85,45,108,.82))}
  .work{left:1573px;top:459px;width:335px;height:476px;--tools:8px;--glass:rgba(84,45,108,.82)}
  cash-window{left:82px;top:203px;width:1623px;height:660px}
  .new{left:309px;top:152px;width:1168px;--title:#999;--close:#e3e3e3}
  .pick{left:348px;top:266px;width:1091px;height:540px}
  ime-bar{right:0;bottom:0}
  </style>
  <div class="stage"><wall-paper></wall-paper>
  <div class="icons">${icons.map(([c, r, i, l]) => `<desk-icon style="grid-area:${r}/${c}" icon="${i}" label="${l}"></desk-icon>`).join('')}</div>
  <glass-panel class="todo" heading="待办事项"><todo-tabs></todo-tabs></glass-panel>
  <glass-panel class="chat" heading="聊天工具"><launch-list items="腾讯会议:meeting,微信:wechat,钉钉:ding"></launch-list></glass-panel>
  <glass-panel class="help" heading="桌面助手"><assist-body></assist-body></glass-panel>
  <glass-panel class="work" heading="办公"><launch-list large items="IntelliJ IDEA 2021.2,,,Google Chrome,,,,,,PyCharm 2021.2.3,,语雀:disc,XMind:xmind"></launch-list></glass-panel>
  <cash-window></cash-window>
  <tool-dialog class="new" heading="新增"><expense-form></expense-form></tool-dialog>
  <tool-dialog class="pick" heading="入库单据"><receipt-picker></receipt-picker></tool-dialog>
  <ime-bar></ime-bar></div>
  <task-bar></task-bar>`;
});
</script>
</body>
</html>
